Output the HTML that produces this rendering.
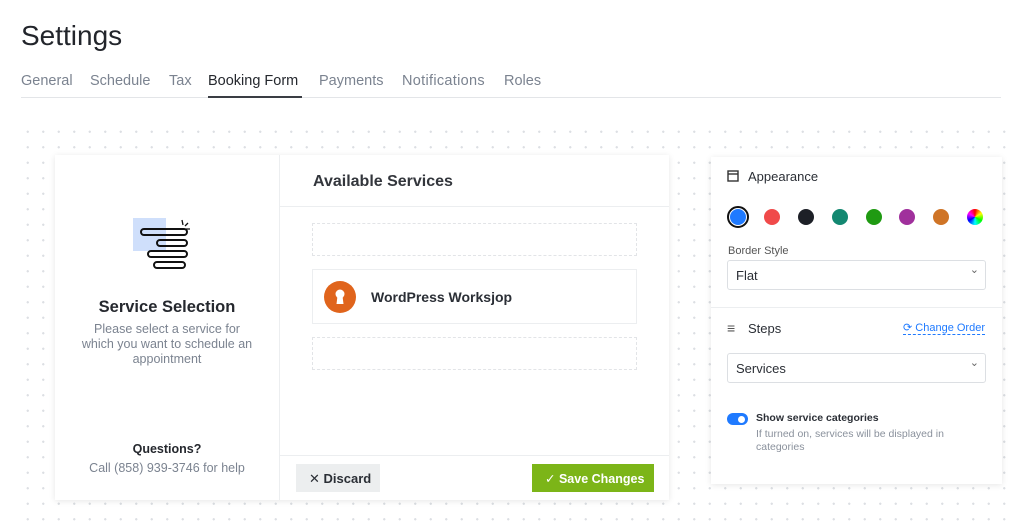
<!DOCTYPE html>
<html><head><meta charset="utf-8"><style>
*{box-sizing:border-box;margin:0;padding:0}
body{width:1024px;height:531px;background:#fff;font-family:"Liberation Sans",sans-serif;position:relative;overflow:hidden;color:#2b2f36}
.abs{position:absolute}
h1{position:absolute;left:21px;top:20px;font-size:28px;font-weight:400;color:#22252b}
.tabs{position:absolute;left:21px;top:73px;font-size:14.5px;color:#7b8390}
.tabs span{position:absolute;white-space:nowrap}
.line{position:absolute;left:21px;top:97px;width:980px;height:1px;background:#e3e5e8}
.dots{position:absolute;left:20px;top:124px;width:992px;height:407px;background-image:radial-gradient(circle,#dcdfe3 1px,transparent 1.3px);background-size:15.5px 15.5px}
.card{position:absolute;background:#fff;box-shadow:0 1px 6px rgba(0,0,0,.1)}
.box{position:absolute;left:312px;width:325px;border:1px dashed #e2e4e7;background:#fff}
.dot{position:absolute;top:209px;width:16px;height:16px;border-radius:50%}
.sel{position:absolute;left:727px;width:259px;height:30px;border:1px solid #dcdfe3;border-radius:3px;font-size:13px;padding:7px 8px;color:#2b2f36}
.sel:after{content:"⌄";position:absolute;right:6px;top:2px;font-size:11px;color:#666}
</style></head><body>
<h1>Settings</h1>
<div class="tabs">
<span style="left:0">General</span><span style="left:69px">Schedule</span><span style="left:148px">Tax</span>
<span style="left:187px;color:#25282e">Booking Form</span><span style="left:298px">Payments</span>
<span style="left:381px;letter-spacing:.3px">Notifications</span><span style="left:483px">Roles</span>
</div>
<div class="line"></div>
<div class="abs" style="left:208px;top:96px;width:94px;height:2px;background:#3a3d44"></div>
<div class="dots"></div>

<div class="card" style="left:55px;top:155px;width:614px;height:345px"></div>
<div class="abs" style="left:279px;top:155px;width:1px;height:345px;background:#eceef0"></div>
<div class="abs" style="left:280px;top:206px;width:389px;height:1px;background:#eceef0"></div>
<div class="abs" style="left:280px;top:455px;width:389px;height:1px;background:#eceef0"></div>

<svg class="abs" style="left:130px;top:215px" width="64" height="65">
<rect x="3" y="3" width="33" height="33" fill="#cfdffb"/>
<g fill="none" stroke="#111" stroke-width="2">
<rect x="11" y="14" width="46" height="6" rx="3"/><rect x="27" y="25" width="30" height="6" rx="3"/>
<rect x="18" y="36" width="39" height="6" rx="3"/><rect x="24" y="47" width="31" height="6" rx="3"/>
</g>
<path d="M52 5l1 5M58 8l-3 3M60 14l-4 0" stroke="#111" stroke-width="1.3"/>
</svg>
<div class="abs" style="left:55px;width:224px;top:298px;text-align:center;font-size:16.5px;font-weight:bold;color:#25282e">Service Selection</div>
<div class="abs" style="left:77px;width:180px;top:322px;text-align:center;font-size:12.5px;line-height:15px;color:#7b8390">Please select a service for which you want to schedule an appointment</div>
<div class="abs" style="left:55px;width:224px;top:442px;text-align:center;font-size:12.5px;font-weight:bold;color:#25282e">Questions?</div>
<div class="abs" style="left:55px;width:224px;top:461px;text-align:center;font-size:12.5px;color:#7b8390">Call (858) 939-3746 for help</div>

<div class="abs" style="left:313px;top:173px;font-size:16px;font-weight:bold;color:#33363c">Available Services</div>
<div class="box" style="top:223px;height:33px"></div>
<div class="box" style="top:269px;height:55px;border-style:solid;border-color:#eceef0"></div>
<div class="abs" style="left:324px;top:281px;width:32px;height:32px;border-radius:50%;background:#e0641c"></div>
<svg class="abs" style="left:332px;top:288px" width="16" height="18"><circle cx="8" cy="6" r="4.5" fill="#fff"/><path d="M5.5 8h5l1 8h-7z" fill="#fff"/></svg>
<div class="abs" style="left:371px;top:289px;font-size:14px;font-weight:bold;color:#2b2f36">WordPress Worksjop</div>
<div class="box" style="top:337px;height:33px"></div>

<div class="abs" style="left:296px;top:464px;width:84px;height:28px;background:#eceeef;font-size:13px;font-weight:bold;padding:7px 0 0 13px;color:#2b2f36"><span style="font-weight:normal">✕</span> Discard</div>
<div class="abs" style="left:532px;top:464px;width:122px;height:28px;background:#7cb518;font-size:12.5px;font-weight:bold;padding:7px 0 0 13px;color:#fff"><span style="font-weight:normal">✓</span> Save Changes</div>

<div class="card" style="left:711px;top:157px;width:291px;height:327px"></div>
<div class="abs" style="left:711px;top:307px;width:291px;height:1px;background:#eceef0"></div>
<svg class="abs" style="left:727px;top:170px" width="12" height="12"><rect x="1" y="1" width="10" height="10" fill="none" stroke="#333" stroke-width="1.4"/><path d="M1 4h10" stroke="#333" stroke-width="1.4"/></svg>
<div class="abs" style="left:748px;top:169px;font-size:13px;color:#2b2f36">Appearance</div>
<div class="abs" style="left:727px;top:206px;width:22px;height:22px;border-radius:50%;border:2px solid #111"></div>
<div class="dot" style="left:730px;top:209px;background:#1f7aff"></div>
<div class="dot" style="left:764px;background:#f04a4a"></div>
<div class="dot" style="left:798px;background:#1d2027"></div>
<div class="dot" style="left:832px;background:#138871"></div>
<div class="dot" style="left:866px;background:#1f9a12"></div>
<div class="dot" style="left:899px;background:#a0309c"></div>
<div class="dot" style="left:933px;background:#cf7426"></div>
<div class="dot" style="left:967px;background:conic-gradient(red,yellow,lime,cyan,blue,magenta,red)"></div>
<div class="abs" style="left:728px;top:245px;font-size:11px;color:#555">Border Style</div>
<div class="sel" style="top:260px">Flat</div>
<div class="abs" style="left:727px;top:320px;font-size:14px;color:#555">≡</div>
<div class="abs" style="left:748px;top:321px;font-size:13px;color:#2b2f36">Steps</div>
<div class="abs" style="left:903px;top:321px;font-size:11px;color:#1f7aff;border-bottom:1px dashed #1f7aff">⟳ Change Order</div>
<div class="sel" style="top:353px">Services</div>
<div class="abs" style="left:727px;top:413px;width:21px;height:12px;border-radius:6px;background:#1f7aff"></div>
<div class="abs" style="left:738px;top:416px;width:7px;height:7px;border-radius:50%;background:#fff"></div>
<div class="abs" style="left:756px;top:412px;font-size:10.5px;font-weight:bold;color:#2b2f36">Show service categories</div>
<div class="abs" style="left:756px;top:428px;width:210px;font-size:10.5px;line-height:13px;color:#8a919c">If turned on, services will be displayed in categories</div>
</body></html>
